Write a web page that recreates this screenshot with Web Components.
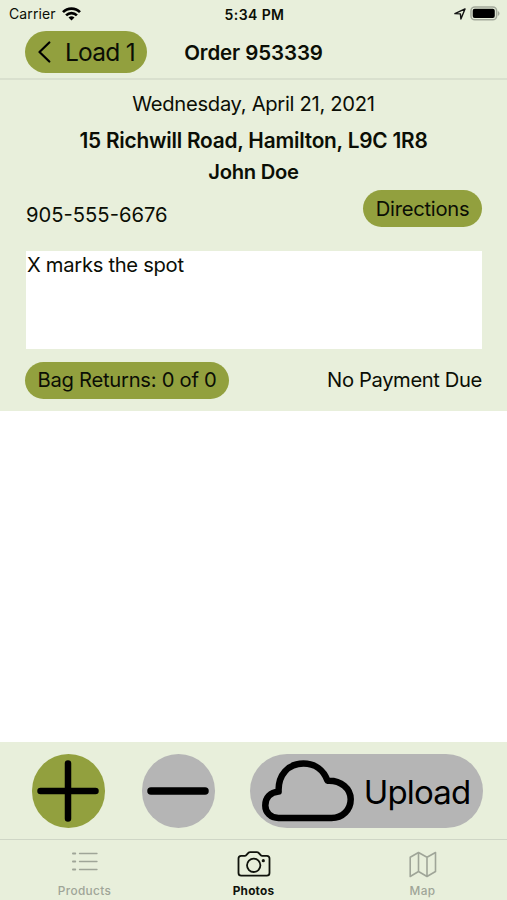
<!DOCTYPE html>
<html lang="en">
<head>
<meta charset="utf-8">
<title>Order 953339</title>
<style>
  html, body { margin: 0; height: 100%; }
  body { background: #fff; color: #0b0e05; font-family: Inter, "Liberation Sans", sans-serif; overflow: hidden; }
</style>
</head>
<body>
<order-screen></order-screen>
<script>
const define = (name, html) => {
  const template = document.createElement('template');
  template.innerHTML = html;
  customElements.define(name, class extends HTMLElement {
    constructor() {
      super();
      this.attachShadow({ mode: 'open' }).append(template.content.cloneNode(true));
    }
  });
};

define('status-bar', `
<style>
  :host { display: grid; grid-template-columns: 1fr auto 1fr; align-items: center; height: 27px; padding: 0 7px 0 9px; box-sizing: border-box; font-size: 14px; line-height: 17px; }
  .left { display: flex; align-items: center; gap: 6px; letter-spacing: 0.12px; }
  .right { display: flex; align-items: center; justify-content: flex-end; gap: 4px; }
  .time { font-weight: 600; font-size: 14px; letter-spacing: 0.4px; padding-top: 1px; }
  svg { display: block; }
</style>
<div class="left"><span>Carrier</span>
  <svg width="19" height="14" viewBox="0 0 19 14"><g fill="none" stroke="#000" stroke-width="2.7"><path d="M1 5.1a12 12 0 0 1 17 0"/><path d="M4.1 8.4a7.7 7.7 0 0 1 10.8 0"/></g><path d="M9.5 13.6 6.500 10.6a4.3 4.3 0 0 1 6 0z"/></svg>
</div>
<span class="time">5:34 PM</span>
<div class="right">
  <svg width="12" height="12" viewBox="0 0 12 12"><path d="M.9 5.6 11 .9 6.900 11 6.400 5.900z" fill="none" stroke="#111" stroke-width="1.4" stroke-linejoin="round"/></svg>
  <svg width="30" height="15" viewBox="0 0 31 15"><rect x="1" y=".8" width="26.5" height="13.2" rx="4" fill="none" stroke="#a3a99b" stroke-width="1.6"/><rect x="2.8" y="2.6" width="22.8" height="9.6" rx="2"/><path d="M28.8 5v5q1.7-.8 1.7-2.5T28.800 5z" fill="#a3a99b"/></svg>
</div>`);

define('pill-button', `
<style>
  :host { display: inline-flex; align-items: center; justify-content: center; box-sizing: border-box; height: 37px; border-radius: 37px; background: #92a03e; font-size: 20.2px; line-height: 24px; letter-spacing: -.26px; white-space: nowrap; flex: none; }
</style><slot></slot>`);

define('nav-bar', `
<style>
  :host { display: grid; grid-template-columns: 1fr auto 1fr; align-items: start; height: 53px; box-sizing: border-box; padding: 4.300px 25px 0; border-bottom: 2px solid #d9e0ce; }
  pill-button { width: 122px; height: 42px; font-size: 24.5px; line-height: 30px; letter-spacing: -.7px; gap: 14px; }
  h1 { margin: 9px 0 0; font-size: 20.5px; line-height: 25px; font-weight: 600; letter-spacing: -.1px; }
  svg { display: block; }
</style>
<div><pill-button><svg width="14" height="22" viewBox="0 0 14 22"><path d="M12.300 1.500 2.500 11l9.800 9.500" fill="none" stroke="#000" stroke-width="2.2" stroke-linecap="round" stroke-linejoin="round"/></svg><span>Load 1</span></pill-button></div>
<h1>Order 953339</h1>`);

define('order-details', `
<style>
  :host { display: block; height: 330.500px; box-sizing: border-box; padding: 11px 25px 0; font-size: 20.2px; line-height: 26px; }
  p { margin: 0; text-align: center; white-space: nowrap; }
  .date { letter-spacing: -.3px; }
  .address { margin-top: 11px; font-weight: 600; font-size: 20.8px; letter-spacing: -.2px; }
  .name { margin-top: 5px; font-weight: 600; letter-spacing: -.28px; }
  .row { display: flex; justify-content: space-between; align-items: center; }
  .contact { margin-top: 5.300px; height: 37px; }
  .phone { padding: 13px 0 0 1px; letter-spacing: 0; }
  .directions { width: 119px; }
  .note { margin: 24.200px 0 12.200px 1px; width: 456px; height: 98px; background: #fff; box-sizing: border-box; padding: .5px 1px 0; letter-spacing: -.3px; }
  .returns { width: 204px; }
  .payment { letter-spacing: -.38px; }
</style>
<p class="date">Wednesday, April 21, 2021</p>
<p class="address">15 Richwill Road, Hamilton, L9C 1R8</p>
<p class="name">John Doe</p>
<div class="row contact"><span class="phone">905-555-6676</span><pill-button class="directions">Directions</pill-button></div>
<div class="note">X marks the spot</div>
<div class="row"><pill-button class="returns">Bag Returns: 0 of 0</pill-button><span class="payment">No Payment Due</span></div>`);

define('photo-toolbar', `
<style>
  :host { display: flex; align-items: center; height: 98px; box-sizing: border-box; padding: 1px 24.500px 0 31.500px; border-bottom: 1px solid #cfd6c6; background: #e8efdb; }
  pill-button { width: 73.500px; height: 73.500px; border-radius: 50%; }
  .remove { background: #b5b5b5; margin-left: 36.500px; }
  .upload { background: #b5b5b5; width: 233px; border-radius: 37px; margin-left: auto; font-size: 33px; line-height: 40px; gap: 10px; letter-spacing: -.85px; color: #000; }
  .upload span { padding-top: 1px; }
  svg { display: block; }
  .line { fill: none; stroke: #000; stroke-width: 6.500; stroke-linecap: round; stroke-linejoin: round; }
</style>
<pill-button><svg width="62" height="62" viewBox="0 0 62 62"><path class="line" d="M31 3.500v55M3.500 31h55"/></svg></pill-button>
<pill-button class="remove"><svg width="62" height="62" viewBox="0 0 62 62"><path class="line" style="stroke-width:7.500" d="M4 31h54"/></svg></pill-button>
<pill-button class="upload"><svg width="92" height="62" viewBox="0 0 92 62"><path class="line" d="M16.500 58C8.500 58 3.300 52.300 3.300 45.500C3.300 37.500 8.500 32.500 16.600 31.600C16 15 26 3.600 41.500 3.600C53 3.600 61.500 10 65.500 20.700C79 20 88.700 28.500 88.700 39.300C88.700 50 80.500 58 69.500 58Z"/></svg><span>Upload</span></pill-button>`);

define('tab-item', `
<style>
  :host { display: flex; flex-direction: column; align-items: center; color: #9fa598; font-size: 11.8px; line-height: 14px; font-weight: 500; letter-spacing: .35px; }
  :host([active]) { color: #10130c; font-weight: 700; letter-spacing: .2px; }
  .icon { padding-top: 10px; box-sizing: content-box; height: 34px; }
  ::slotted(svg) { display: block; }
</style><div class="icon"><slot name="icon"></slot></div><span><slot></slot></span>`);

define('tab-bar', `
<style>
  :host { display: grid; grid-template-columns: repeat(3, 1fr); height: 60px; background: #e8efdb; }
  svg { fill: none; stroke: currentColor; stroke-linecap: round; stroke-linejoin: round; }
</style>
<tab-item><svg slot="icon" width="28" height="30" viewBox="0 0 28 30"><g stroke-width="1.3"><path d="M8.500 3.500H26M8.500 11.500H26M8.500 19.500H26"/><path stroke-width="1.800" d="M1.900 3.500h2.400M1.900 11.500h2.400M1.900 19.500h2.400"/></g></svg>Products</tab-item>
<tab-item active><svg slot="icon" width="34" height="30" viewBox="0 0 34 30"><g stroke-width="1.800"><path d="M4.200 5.800H8c2 0 2.500-3.600 5-3.600h7c2.500 0 3 3.600 5 3.600h4.800q2.700 0 2.700 2.700v14.500q0 2.700-2.700 2.700H4.200q-2.700 0-2.700-2.700V8.500q0-2.700 2.700-2.700z"/><circle cx="16.700" cy="15.300" r="6.700"/></g><circle cx="26.300" cy="10.700" r="1.600" fill="currentColor" stroke="none"/></svg>Photos</tab-item>
<tab-item><svg slot="icon" width="28" height="30" viewBox="0 0 28 30"><path stroke-width="1.600" d="M1.200 7.200 9.500 2.500 18 7.200 26.500 2.500V21.500L18 26.500 9.500 21.500 1.200 26.500zM9.500 2.500v19M18 7.200v19.300"/></svg>Map</tab-item>`);

define('order-screen', `
<style>
  :host { display: flex; flex-direction: column; width: 507px; height: 900px; background: #fff; }
  header { background: #e8efdb; flex: none; }
  main { flex: 1; background: #fff; }
  photo-toolbar, tab-bar { flex: none; }
</style>
<header><status-bar></status-bar><nav-bar></nav-bar><order-details></order-details></header>
<main></main>
<photo-toolbar></photo-toolbar>
<tab-bar></tab-bar>`);
</script>
</body>
</html>
